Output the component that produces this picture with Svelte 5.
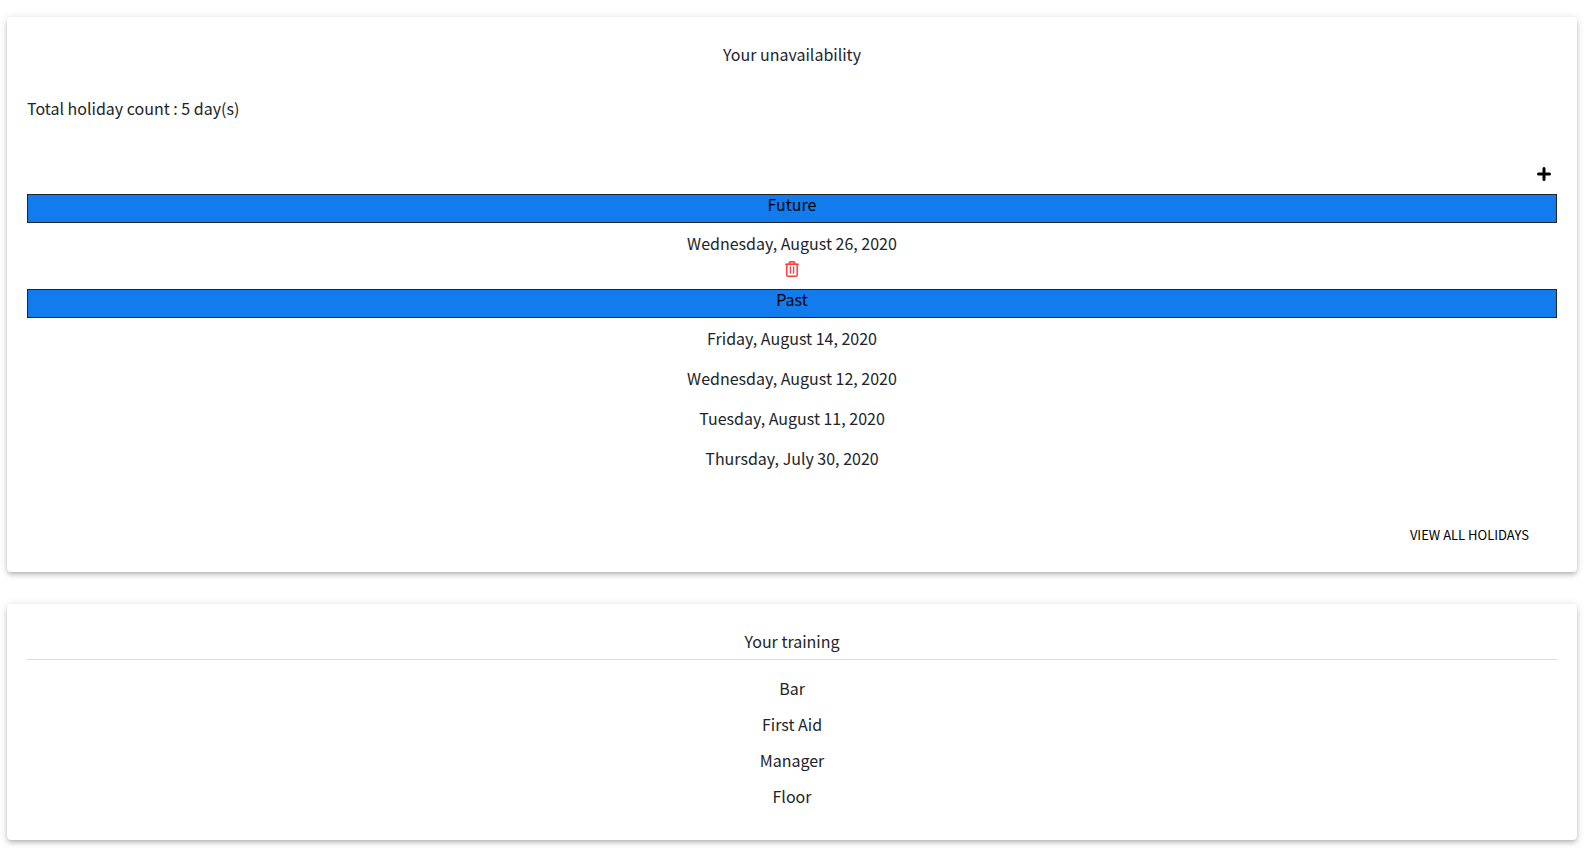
<script>
  let future = $state(['Wednesday, August 26, 2020']);
  const past = [
    'Friday, August 14, 2020',
    'Wednesday, August 12, 2020',
    'Tuesday, August 11, 2020',
    'Thursday, July 30, 2020'
  ];
  const training = ['Bar', 'First Aid', 'Manager', 'Floor'];
  const total = 5;

  function remove(day) {
    future = future.filter((d) => d !== day);
  }
</script>

<main>
  <section class="card">
    <h2>Your unavailability</h2>
    <p class="total">Total holiday count : {total} day(s)</p>

    <div class="toolbar">
      <button type="button" class="add" aria-label="Add holiday">
        <svg width="14" height="14" viewBox="0 0 14 14" aria-hidden="true">
          <path d="M7 1.5v11M1.5 7h11" stroke="#000" stroke-width="3" stroke-linecap="round" />
        </svg>
      </button>
    </div>

    <h3>Future</h3>
    <ul class="dates future">
      {#each future as day}
        <li>
          {day}
          <button type="button" class="delete" aria-label="Delete {day}" onclick={() => remove(day)}>
            <svg width="14" height="16" viewBox="0 0 14 16" aria-hidden="true">
              <path d="M3.6 2.8L4.6.8h4.8l1 2z" fill="#fc3d39" fill-opacity=".4" />
              <g fill="none" stroke="#fc3d39" stroke-width="1.5" stroke-linecap="round" stroke-linejoin="round">
                <path d="M.8 3.2h12.4" />
                <path d="M3.8 2.9l.8-1.6q.3-.5.8-.5h3.2q.5 0 .8.5l.8 1.6" />
                <path d="M1.8 3.5v10.4q0 1.3 1.3 1.3h7.8q1.3 0 1.3-1.3V3.5" />
                <path d="M5.4 6v6M8.6 6v6" stroke-width="1.3" />
              </g>
            </svg>
          </button>
        </li>
      {/each}
    </ul>

    <h3>Past</h3>
    <ul class="dates">
      {#each past as day}
        <li>{day}</li>
      {/each}
    </ul>

    <div class="actions">
      <button type="button" class="view-all">VIEW ALL HOLIDAYS</button>
    </div>
  </section>

  <section class="card">
    <h2 class="ruled">Your training</h2>
    <ul class="training">
      {#each training as item}
        <li>{item}</li>
      {/each}
    </ul>
  </section>
</main>

<style>
  :global(body) {
    background: #fff;
  }

  main {
    display: flex;
    flex-direction: column;
    gap: 32px;
    padding: 17px 15px 14px 7px;
    color: #212529;
    font-family: 'Noto Sans CJK JP', 'Noto Sans CJK SC', sans-serif;
    font-size: 16px;
    line-height: 24px;
  }

  .card {
    padding: 25px 20px 19px;
    border-radius: 4px;
    background: #fff;
    box-shadow:
      0 2px 4px -1px rgba(0, 0, 0, 0.2),
      0 4px 5px 0 rgba(0, 0, 0, 0.08),
      0 1px 10px 0 rgba(0, 0, 0, 0.12);
  }

  h2,
  h3,
  p,
  ul {
    margin: 0;
    padding: 0;
    font-size: 16px;
    font-weight: 400;
    list-style: none;
  }

  h2,
  h3,
  li {
    text-align: center;
  }

  button {
    display: flex;
    align-items: center;
    justify-content: center;
    margin: 0;
    padding: 0;
    border: 0;
    background: none;
    color: #000;
    font: inherit;
    cursor: pointer;
  }

  .total {
    margin-top: 30px;
  }

  .toolbar,
  .actions {
    display: flex;
    justify-content: flex-end;
  }

  .toolbar {
    margin-top: 34px;
  }

  .add {
    width: 26px;
    height: 40px;
  }

  h3 {
    padding-bottom: 9px;
    border: 1px solid #212529;
    background: #127cee;
    color: #000;
    line-height: 18px;
  }

  .dates {
    display: flex;
    flex-direction: column;
    gap: 16px;
    padding-top: 8px;
  }

  .future {
    padding-bottom: 8px;
  }

  .delete {
    width: 26px;
    height: 26px;
    margin: 0 auto;
    padding-top: 2px;
  }

  .actions {
    margin-top: 47px;
  }

  .view-all {
    padding: 8px 28px;
    font-size: 13px;
    line-height: 20px;
  }

  .ruled {
    padding-bottom: 6px;
    border-bottom: 1px solid #d9dadb;
  }

  .training {
    display: flex;
    flex-direction: column;
    gap: 12px;
    padding: 16px 0 13px;
  }
</style>
